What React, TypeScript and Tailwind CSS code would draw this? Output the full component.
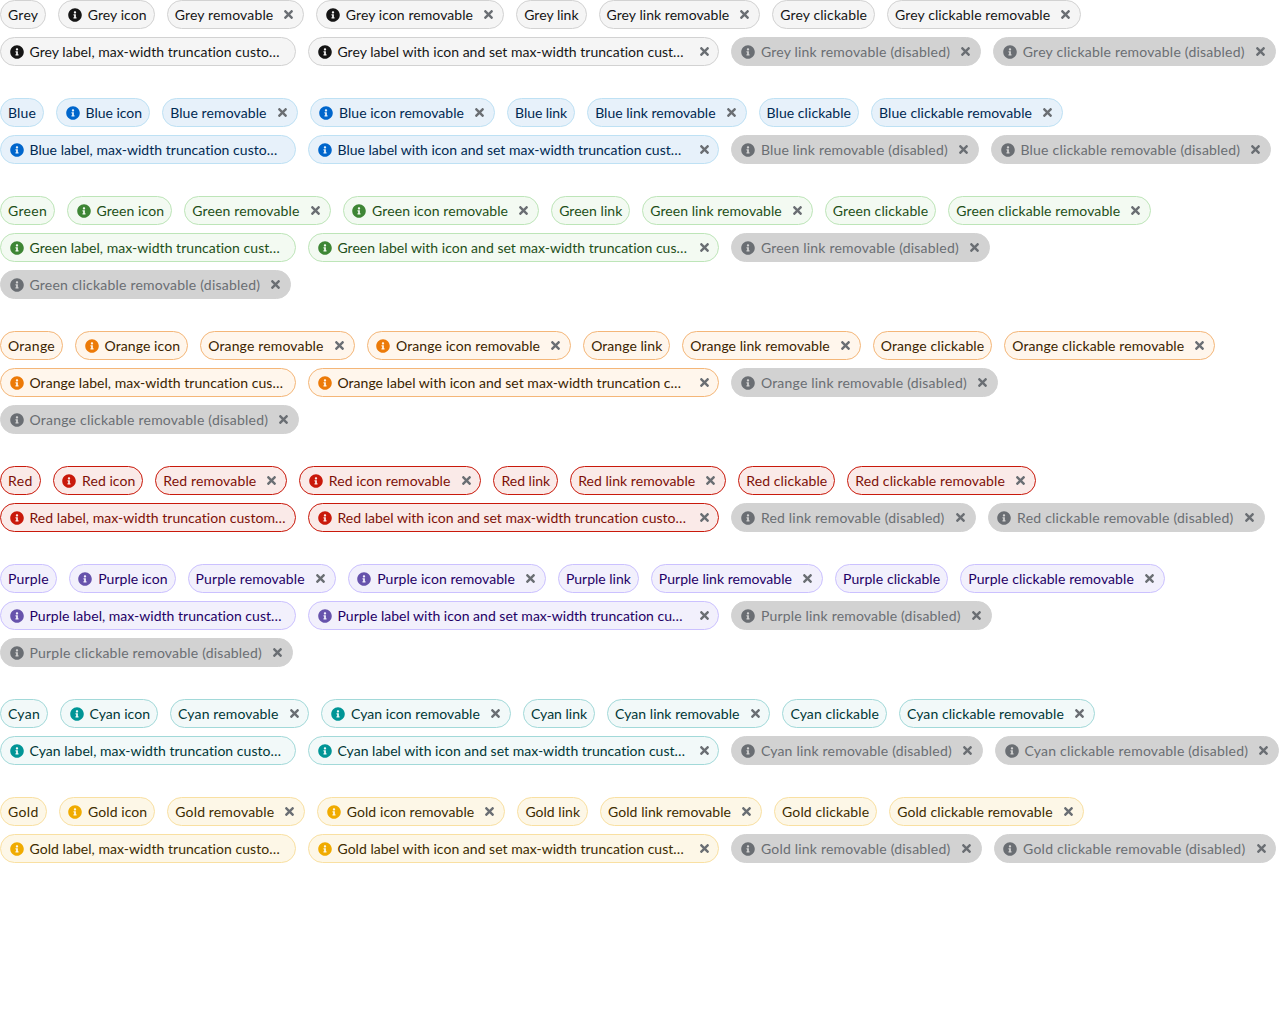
import React, { useLayoutEffect, useRef, useState } from 'react';
import { FaInfoCircle, FaTimes } from 'react-icons/fa';

type Tone = {
  name: string;
  nameWidth: number;
  pill: string;
  icon: string;
  short: string;
  shortWidth: number;
  long: string;
  longWidth: number;
};

const tones: Tone[] = [
  { name: 'Grey', nameWidth: 30.3, pill: 'bg-[#f5f5f5] border-[#d2d2d2] text-[#151515]', icon: 'text-[#151515]', short: 'custo…', shortWidth: 250.4, long: 'cust…', longWidth: 346.4 },
  { name: 'Blue', nameWidth: 28.02, pill: 'bg-[#e7f1fa] border-[#bee1f4] text-[#002952]', icon: 'text-[#0066cc]', short: 'custo…', shortWidth: 248, long: 'cust…', longWidth: 344 },
  { name: 'Green', nameWidth: 39.05, pill: 'bg-[#f3faf2] border-[#bde5b8] text-[#1e4f18]', icon: 'text-[#3e8635]', short: 'cust…', shortWidth: 250.6, long: 'cus…', longWidth: 349.8 },
  { name: 'Orange', nameWidth: 47.05, pill: 'bg-[#fff6ec] border-[#f4b678] text-[#3b1f00]', icon: 'text-[#ec7a08]', short: 'cus…', shortWidth: 253.8, long: 'c…', longWidth: 343.8 },
  { name: 'Red', nameWidth: 24.63, pill: 'bg-[#faeae8] border-[#c9190b] text-[#7d1007]', icon: 'text-[#c9190b]', short: 'custom…', shortWidth: 256.3, long: 'custo…', longWidth: 348.8 },
  { name: 'Purple', nameWidth: 40.75, pill: 'bg-[#f2f0fc] border-[#cbc1ff] text-[#1f0066]', icon: 'text-[#6753ac]', short: 'cust…', shortWidth: 252.3, long: 'cu…', longWidth: 345.3 },
  { name: 'Cyan', nameWidth: 32, pill: 'bg-[#f2f9f9] border-[#a2d9d9] text-[#003737]', icon: 'text-[#009596]', short: 'custo…', shortWidth: 251.8, long: 'cust…', longWidth: 347.8 },
  { name: 'Gold', nameWidth: 30.6, pill: 'bg-[#fdf7e7] border-[#f9e0a2] text-[#3d2c00]', icon: 'text-[#f0ab00]', short: 'custo…', shortWidth: 250.5, long: 'cust…', longWidth: 346.6 },
];

const variants = [
  { suffix: '', extra: 0, icon: false, close: false },
  { suffix: ' icon', extra: 28.5, icon: true, close: false },
  { suffix: ' removable', extra: 68.4, icon: false, close: true },
  { suffix: ' icon removable', extra: 96.9, icon: true, close: true },
  { suffix: ' link', extra: 24.1, icon: false, close: false },
  { suffix: ' link removable', extra: 92.4, icon: false, close: true },
  { suffix: ' clickable', extra: 56.5, icon: false, close: false },
  { suffix: ' clickable removable', extra: 124.9, icon: false, close: true },
];

// Spreads the letters so that the text fills exactly the given width.
function FittedText({ text, width }: { text: string; width: number }) {
  const ref = useRef<HTMLSpanElement>(null);
  const [spacing, setSpacing] = useState(0);
  useLayoutEffect(() => {
    const el = ref.current;
    if (!el) return;
    el.style.letterSpacing = '0px';
    const natural = el.getBoundingClientRect().width;
    const next = (width - natural) / text.length;
    el.style.letterSpacing = `${next}px`;
    setSpacing(next);
  }, [text, width]);
  return (
    <span className="block shrink-0 whitespace-pre" style={{ width }}>
      <span ref={ref} style={{ letterSpacing: `${spacing}px` }}>{text}</span>
    </span>
  );
}

type LabelProps = {
  text: string;
  textWidth: number;
  pill: string;
  iconColor?: string;
  close?: boolean;
  size?: string;
};

function Label({ text, textWidth, pill, iconColor, close, size = '' }: LabelProps) {
  return (
    <span className={`flex h-[29px] items-center rounded-full border px-[7px] ${pill} ${size}`}>
      {iconColor && <FaInfoCircle className={`ml-[1.55px] mr-[5.95px] size-3.5 shrink-0 ${iconColor}`} />}
      <FittedText text={text} width={textWidth} />
      {close && (
        <button aria-label={`Close ${text}`} className="mb-px mr-[0.9px] ml-auto flex w-[13px] shrink-0 justify-center text-[#6a6e73]">
          <FaTimes className="size-[13px]" />
        </button>
      )}
    </span>
  );
}

const disabled = 'bg-[#d2d2d2] border-[#d2d2d2] text-[#6a6e73]';

export default function App() {
  return (
    <main className="flex min-h-screen w-full flex-col gap-8 bg-white font-['Lato',sans-serif] text-[14px] leading-[21px]">
      {tones.map((t) => (
        <section key={t.name} className="flex flex-wrap gap-x-3 gap-y-2">
          {variants.map((v) => {
            const w = t.nameWidth + v.extra;
            return (
              <span key={v.suffix} className="flex" style={{ width: w + 16 + (v.icon ? 21.6 : 0) + (v.close ? 23 : 0) }}>
                <Label text={t.name + v.suffix} textWidth={w} pill={t.pill} iconColor={v.icon ? t.icon : undefined} close={v.close} size="w-full" />
              </span>
            );
          })}
          <Label text={`${t.name} label, max-width truncation ${t.short}`} textWidth={t.shortWidth} pill={t.pill} iconColor={t.icon} size="w-[296px]" />
          <Label text={`${t.name} label with icon and set max-width truncation ${t.long}`} textWidth={t.longWidth} pill={t.pill} iconColor={t.icon} close size="w-[411.4px]" />
          {[
            { suffix: ' link removable (disabled)', extra: 159 },
            { suffix: ' clickable removable (disabled)', extra: 191.7 },
          ].map((d) => (
            <span key={d.suffix} className="flex" style={{ width: t.nameWidth + d.extra + 60.6 }}>
              <Label text={t.name + d.suffix} textWidth={t.nameWidth + d.extra} pill={disabled} iconColor="text-[#6a6e73]" close size="w-full" />
            </span>
          ))}
        </section>
      ))}
    </main>
  );
}
